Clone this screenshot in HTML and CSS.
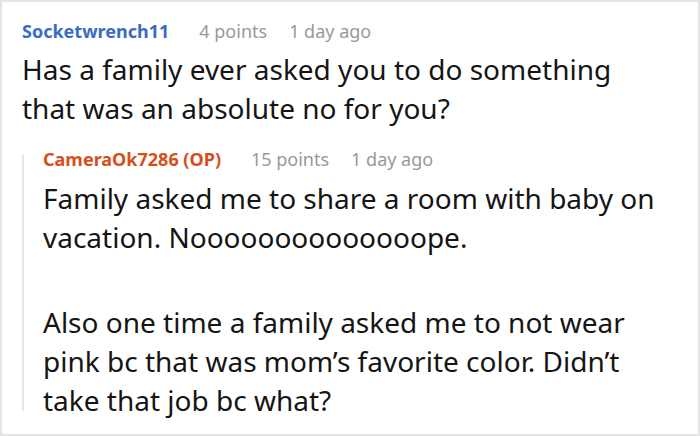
FILE: index.html
```html
<!DOCTYPE html>
<html>
<head>
<meta charset="utf-8">
<link rel="stylesheet" href="styles.css">
</head>
<body>
<div class="frame">
  <div class="comment">
    <div class="meta">
      <span class="author">Socketwrench11</span>
      <span class="info">4 points</span>
      <span class="info">1 day ago</span>
    </div>
    <p class="text">Has a family ever asked you to do something that was an absolute no for you?</p>
    <div class="reply">
      <div class="thread"></div>
      <div class="reply-body">
        <div class="meta">
          <span class="author op">CameraOk7286 (OP)</span>
          <span class="info">15 points</span>
          <span class="info">1 day ago</span>
        </div>
        <p class="text">Family asked me to share a room with baby on vacation. Noooooooooooooope.</p>
        <p class="text gap">Also one time a family asked me to not wear pink bc that was mom’s favorite color. Didn’t take that job bc what?</p>
      </div>
    </div>
  </div>
</div>
</body>
</html>
```
FILE: styles.css
```css
html, body {
  margin: 0;
  padding: 0;
  background: #fff;
}
.frame {
  width: 700px;
  height: 436px;
  box-sizing: border-box;
  border: 2px solid #e4e4e4;
  overflow: hidden;
  font-family: "Noto Sans", "Open Sans", sans-serif;
}
.comment {
  padding: 12px 0 0 20px;
}
.meta {
  display: flex;
  align-items: baseline;
  gap: 22px;
  font-size: 18px;
  line-height: 34px;
  color: #999;
}
.author {
  font-weight: 700;
  color: #3a6cc0;
  margin-right: 8px;
}
.author.op {
  color: #d64f1a;
}
.text {
  margin: 2px 0 0 0;
  font-size: 28px;
  line-height: 39px;
  color: #151515;
  width: 600px;
}
.reply {
  display: flex;
  margin-top: 14px;
}
.thread {
  flex: none;
  width: 2px;
  background: #e6e6e6;
  margin: 13px 19px 9px 0;
}
.reply-body .text {
  width: 620px;
  margin-top: 3px;
}
.reply-body .text.gap {
  margin-top: 46px;
}
```
